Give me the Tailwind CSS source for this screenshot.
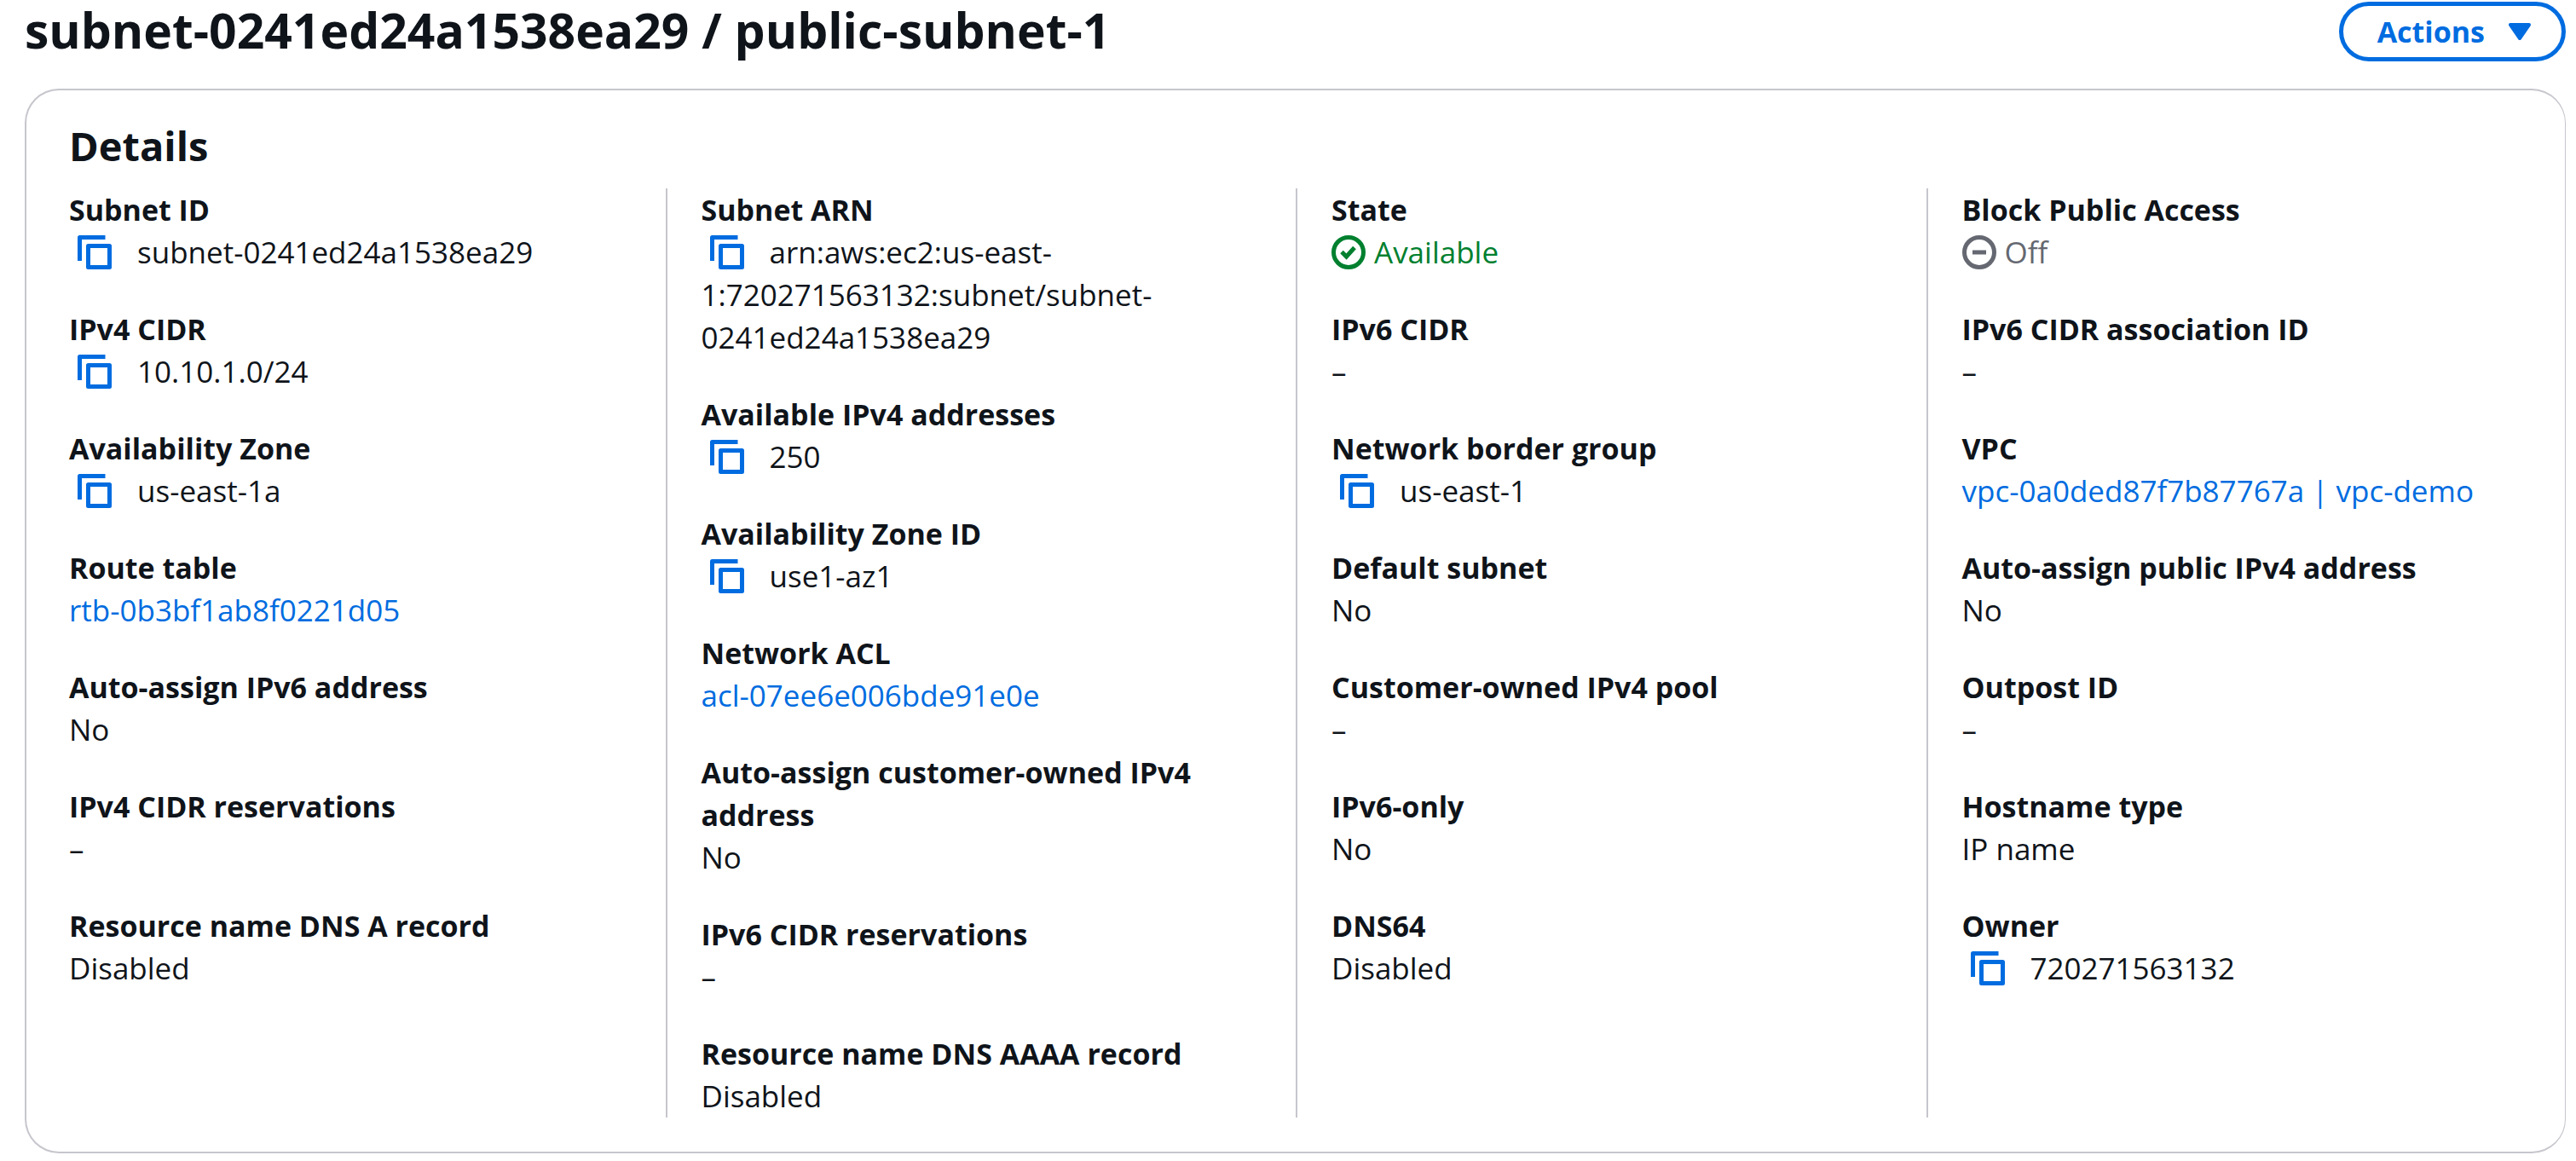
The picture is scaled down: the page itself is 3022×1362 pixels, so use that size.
<!DOCTYPE html>
<html lang="en">
<head>
<meta charset="utf-8">
<title>Subnet details</title>
<script src="https://cdn.jsdelivr.net/npm/@tailwindcss/browser@4"></script>
</head>
<body class="bg-white pl-[29px] pr-3 pt-[2px] pb-2 font-['Open_Sans','Noto_Sans',sans-serif] text-[35px] leading-[50px] text-[#0f141a]">
<svg class="hidden" aria-hidden="true">
  <symbol id="copy" viewBox="0 0 40 40"><path d="M2.5 30V2.5H32.5M12.5 12.5h25v25h-25z" fill="none" stroke="currentColor" stroke-width="5" stroke-linejoin="round"/></symbol>
</svg>
<header class="flex h-[70px] items-start justify-between">
  <h1 class="text-[57px] leading-[66px] font-bold">subnet-0241ed24a1538ea29 / public-subnet-1</h1>
  <button type="button" class="flex h-[70px] items-center gap-7 rounded-full border-5 border-[#006ce0] pl-10 pr-9 text-[34px] font-bold text-[#006ce0]">Actions
    <svg class="h-5 w-[26px]" viewBox="0 0 26 20" aria-hidden="true"><path d="M2 2h22L13 18z" fill="currentColor" stroke="currentColor" stroke-width="4" stroke-linejoin="round"/></svg>
  </button>
</header>
<main class="mt-8 rounded-[40px] border-2 border-r border-[#c6c6cd] px-[10px] pb-10">
  <h2 class="pl-10 pt-[34px] pb-[19px] text-[47px] leading-[62px] font-bold">Details</h2>
  <div class="grid grid-cols-4">
    <dl class="flex flex-col gap-10 px-10">
      <div><dt class="text-[34px] font-bold">Subnet ID</dt><dd class="flex items-center gap-5"><button type="button" aria-label="Copy subnet ID" class="px-[10px] text-[#006ce0]"><svg class="size-10"><use href="#copy"/></svg></button>subnet-0241ed24a1538ea29</dd></div>
      <div><dt class="text-[34px] font-bold">IPv4 CIDR</dt><dd class="flex items-center gap-5"><button type="button" aria-label="Copy IPv4 CIDR" class="px-[10px] text-[#006ce0]"><svg class="size-10"><use href="#copy"/></svg></button>10.10.1.0/24</dd></div>
      <div><dt class="text-[34px] font-bold">Availability Zone</dt><dd class="flex items-center gap-5"><button type="button" aria-label="Copy Availability Zone" class="px-[10px] text-[#006ce0]"><svg class="size-10"><use href="#copy"/></svg></button>us-east-1a</dd></div>
      <div><dt class="text-[34px] font-bold">Route table</dt><dd><a href="#" class="text-[#006ce0]">rtb-0b3bf1ab8f0221d05</a></dd></div>
      <div><dt class="text-[34px] font-bold">Auto-assign IPv6 address</dt><dd>No</dd></div>
      <div><dt class="text-[34px] font-bold">IPv4 CIDR reservations</dt><dd>–</dd></div>
      <div><dt class="text-[34px] font-bold">Resource name DNS A record</dt><dd>Disabled</dd></div>
    </dl>
    <dl class="flex flex-col gap-10 border-l-2 border-[#c6c6cd] px-10">
      <div><dt class="text-[34px] font-bold">Subnet ARN</dt><dd><button type="button" aria-label="Copy subnet ARN" class="mr-5 inline-flex h-[50px] items-center px-[10px] align-top text-[#006ce0]"><svg class="size-10"><use href="#copy"/></svg></button>arn:aws:ec2:us-east-<wbr>1:720271563132:subnet/subnet-<wbr>0241ed24a1538ea29</dd></div>
      <div><dt class="text-[34px] font-bold">Available IPv4 addresses</dt><dd class="flex items-center gap-5"><button type="button" aria-label="Copy available IPv4 addresses" class="px-[10px] text-[#006ce0]"><svg class="size-10"><use href="#copy"/></svg></button>250</dd></div>
      <div><dt class="text-[34px] font-bold">Availability Zone ID</dt><dd class="flex items-center gap-5"><button type="button" aria-label="Copy Availability Zone ID" class="px-[10px] text-[#006ce0]"><svg class="size-10"><use href="#copy"/></svg></button>use1-az1</dd></div>
      <div><dt class="text-[34px] font-bold">Network ACL</dt><dd><a href="#" class="text-[#006ce0]">acl-07ee6e006bde91e0e</a></dd></div>
      <div><dt class="text-[34px] font-bold">Auto-assign customer-owned IPv4 address</dt><dd>No</dd></div>
      <div><dt class="text-[34px] font-bold">IPv6 CIDR reservations</dt><dd>–</dd></div>
      <div><dt class="text-[34px] font-bold">Resource name DNS AAAA record</dt><dd>Disabled</dd></div>
    </dl>
    <dl class="flex flex-col gap-10 border-l-2 border-[#c6c6cd] px-10">
      <div><dt class="text-[34px] font-bold">State</dt><dd class="flex items-center gap-[10px] text-[#00802f]"><svg class="size-10" viewBox="0 0 40 40" fill="none" stroke="currentColor" stroke-width="5" aria-hidden="true"><circle cx="20" cy="20" r="17.5"/><path d="m12 19.5 5.500 5.500 9.500-10.500"/></svg>Available</dd></div>
      <div><dt class="text-[34px] font-bold">IPv6 CIDR</dt><dd>–</dd></div>
      <div><dt class="text-[34px] font-bold">Network border group</dt><dd class="flex items-center gap-5"><button type="button" aria-label="Copy network border group" class="px-[10px] text-[#006ce0]"><svg class="size-10"><use href="#copy"/></svg></button>us-east-1</dd></div>
      <div><dt class="text-[34px] font-bold">Default subnet</dt><dd>No</dd></div>
      <div><dt class="text-[34px] font-bold">Customer-owned IPv4 pool</dt><dd>–</dd></div>
      <div><dt class="text-[34px] font-bold">IPv6-only</dt><dd>No</dd></div>
      <div><dt class="text-[34px] font-bold">DNS64</dt><dd>Disabled</dd></div>
    </dl>
    <dl class="flex flex-col gap-10 border-l-2 border-[#c6c6cd] px-10">
      <div><dt class="text-[34px] font-bold">Block Public Access</dt><dd class="flex items-center gap-[10px] text-[#656871]"><svg class="size-10" viewBox="0 0 40 40" fill="none" stroke="currentColor" stroke-width="5" aria-hidden="true"><circle cx="20" cy="20" r="17.5"/><path d="M12 20h16"/></svg>Off</dd></div>
      <div><dt class="text-[34px] font-bold">IPv6 CIDR association ID</dt><dd>–</dd></div>
      <div><dt class="text-[34px] font-bold">VPC</dt><dd><a href="#" class="text-[#006ce0]">vpc-0a0ded87f7b87767a | vpc-demo</a></dd></div>
      <div><dt class="text-[34px] font-bold">Auto-assign public IPv4 address</dt><dd>No</dd></div>
      <div><dt class="text-[34px] font-bold">Outpost ID</dt><dd>–</dd></div>
      <div><dt class="text-[34px] font-bold">Hostname type</dt><dd>IP name</dd></div>
      <div><dt class="text-[34px] font-bold">Owner</dt><dd class="flex items-center gap-5"><button type="button" aria-label="Copy owner" class="px-[10px] text-[#006ce0]"><svg class="size-10"><use href="#copy"/></svg></button>720271563132</dd></div>
    </dl>
  </div>
</main>
</body>
</html>
